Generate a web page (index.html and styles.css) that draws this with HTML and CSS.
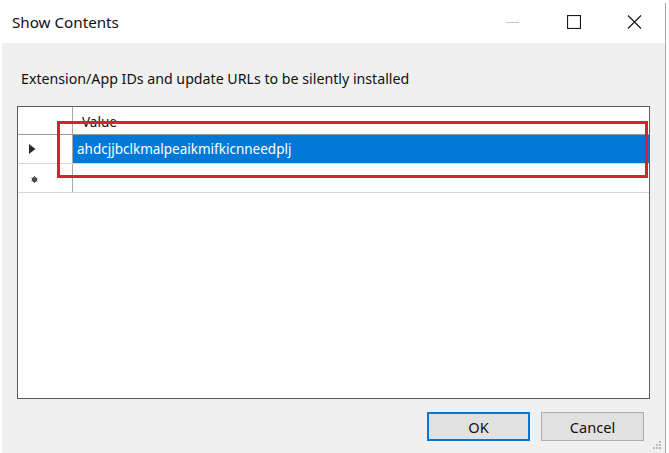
FILE: index.html
```html
<!DOCTYPE html>
<html>
<head>
<meta charset="utf-8">
<link rel="stylesheet" href="styles.css">
</head>
<body>
<div class="window">
  <div class="titlebar">
    <span class="title">Show Contents</span>
    <div class="controls">
      <div class="ctl"><svg width="14" height="14" viewBox="0 0 14 14"><line x1="0" y1="7.5" x2="13" y2="7.5" stroke="#c4c4c4" stroke-width="1"/></svg></div>
      <div class="ctl"><svg width="14" height="14" viewBox="0 0 14 14"><rect x="0.5" y="0.5" width="13" height="13" fill="none" stroke="#1a1a1a" stroke-width="1.2"/></svg></div>
      <div class="ctl"><svg width="15" height="14" viewBox="0 0 15 14"><path d="M1 0.5 L14 13.5 M14 0.5 L1 13.5" stroke="#1a1a1a" stroke-width="1.2" fill="none"/></svg></div>
    </div>
  </div>
  <div class="content">
    <p class="label">Extension/App IDs and update URLs to be silently installed</p>
    <div class="grid">
      <div class="row head">
        <div class="rh"></div>
        <div class="cell">Value</div>
      </div>
      <div class="row sel">
        <div class="rh"><svg width="7" height="10" viewBox="0 0 7 10"><path d="M0 0 L6.5 5 L0 10 Z" fill="#2b2b2b"/></svg></div>
        <div class="cell">ahdcjjbclkmalpeaikmifkicnneedplj</div>
      </div>
      <div class="row newrow">
        <div class="rh"><svg width="7" height="7" viewBox="0 0 7 7"><circle cx="3.5" cy="3.5" r="2.6" fill="#3a3a3a"/><path d="M3.5 0 V7 M0.5 2 L6.5 5 M6.5 2 L0.5 5" stroke="#555" stroke-width="1"/></svg></div>
        <div class="cell"></div>
      </div>
      <div class="highlight"></div>
    </div>
    <div class="buttons">
      <button class="btn default">OK</button>
      <button class="btn">Cancel</button>
    </div>
  </div>
</div>
<svg class="grip" width="10" height="10" viewBox="0 0 10 10">
  <rect x="7" y="1" width="2" height="2" fill="#bcbcbc"/>
  <rect x="4" y="4" width="2" height="2" fill="#bcbcbc"/>
  <rect x="7" y="4" width="2" height="2" fill="#bcbcbc"/>
  <rect x="1" y="7" width="2" height="2" fill="#bcbcbc"/>
  <rect x="4" y="7" width="2" height="2" fill="#bcbcbc"/>
  <rect x="7" y="7" width="2" height="2" fill="#bcbcbc"/>
</svg>
</body>
</html>
```

FILE: styles.css
```css
html, body {
  margin: 0;
  padding: 0;
  background: #ffffff;
  width: 669px;
  height: 453px;
  overflow: hidden;
  font-family: "Noto Sans", "Open Sans", sans-serif;
  color: #000;
}

body {
  position: relative;
}

.window {
  margin: 3px 0 0 2px;
  width: 663px;
  height: 450px;
  border-right: 1px solid #a8a8a8;
  display: flex;
  flex-direction: column;
}

.titlebar {
  height: 40px;
  background: #ffffff;
  display: flex;
  align-items: center;
  justify-content: space-between;
}

.title {
  padding-left: 10px;
  font-size: 15.2px;
  color: #111;
  margin-top: -2px;
}

.controls {
  display: flex;
  height: 100%;
}

.ctl {
  width: 61px;
  display: flex;
  align-items: center;
  justify-content: center;
  margin-top: -3px;
}

.content {
  flex: 1;
  background: #f0f0f0;
  padding: 0 15px 0 15px;
  display: flex;
  flex-direction: column;
}

.label {
  margin: 26px 0 0 4px;
  font-size: 14.2px;
  line-height: 19px;
  color: #111;
}

.grid {
  position: relative;
  margin-top: 18px;
  height: 291px;
  width: 631px;
  border: 1px solid #5a5a5a;
  background: #ffffff;
}

.row {
  display: flex;
  height: 28px;
  border-bottom: 1px solid #d6d6d6;
}

.row.head {
  height: 27px;
  border-bottom: 1px solid #9c9c9c;
}

.rh {
  width: 55px;
  border-right: 1px solid #a8a8a8;
  display: flex;
  align-items: center;
  padding-left: 11px;
  box-sizing: border-box;
}

.newrow .rh {
  padding-left: 13px;
  padding-top: 2px;
}

.cell {
  flex: 1;
  display: flex;
  align-items: center;
  font-size: 13.5px;
  padding-left: 4px;
  color: #111;
}

.head .cell {
  padding-left: 9px;
  padding-top: 2px;
}

.sel .cell {
  background: #0078d7;
  color: #ffffff;
}

.highlight {
  position: absolute;
  left: 39px;
  right: 1px;
  top: 14px;
  height: 51px;
  border: 3px solid #dc1f2e;
}

.buttons {
  display: flex;
  justify-content: flex-end;
  gap: 11px;
  margin-top: 13px;
  padding-right: 6px;
}

.btn {
  width: 103px;
  height: 29px;
  background: #e1e1e1;
  border: 1px solid #adadad;
  font-family: "Noto Sans", "Open Sans", sans-serif;
  font-size: 14.6px;
  color: #111;
  padding: 0;
  box-sizing: border-box;
}

.btn.default {
  border: 2px solid #0078d7;
}

.grip {
  position: absolute;
  left: 652px;
  top: 440px;
}
```
